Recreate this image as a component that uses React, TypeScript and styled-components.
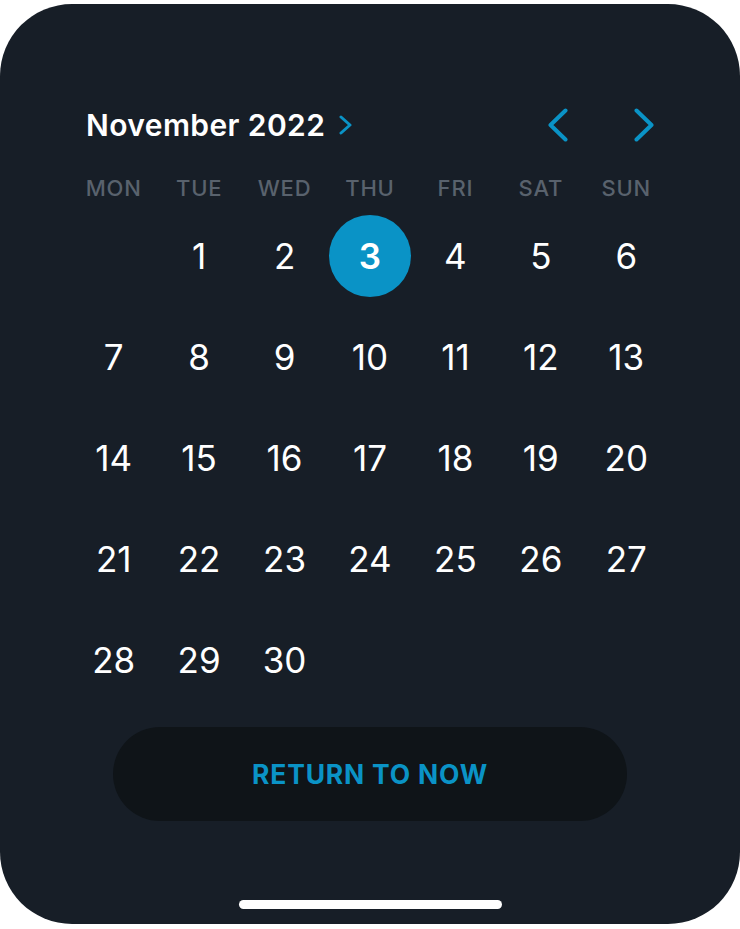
import React from "react";
import styled, { createGlobalStyle } from "styled-components";

const Global = createGlobalStyle`
  html, body { margin: 0; padding: 0; background: #ffffff; }
  body { font-family: Inter, "Noto Sans", sans-serif; }
`;

const Card = styled.div`
  box-sizing: border-box;
  width: 740px;
  height: 920px;
  margin-top: 4px;
  background: #171e27;
  border-radius: 72px;
  padding: 101px 71px 0;
  display: flex;
  flex-direction: column;
`;

const Header = styled.div`
  height: 40px;
  padding: 0 15px 0 15px;
  display: flex;
  align-items: center;
  justify-content: space-between;
`;

const TitleGroup = styled.div`
  display: flex;
  align-items: center;
  gap: 14px;
`;

const Title = styled.div`
  color: #ffffff;
  font-size: 30px;
  font-weight: 600;
  letter-spacing: 0.4px;
`;

const NavGroup = styled.div`
  display: flex;
  align-items: center;
  gap: 66px;
`;

const IconBtn = styled.button`
  background: none;
  border: none;
  padding: 0;
  display: flex;
  cursor: pointer;
`;

const Weekdays = styled.div`
  margin-top: 28px;
  height: 30px;
  display: grid;
  grid-template-columns: repeat(7, 1fr);
  align-items: center;
`;

const Weekday = styled.div`
  text-align: center;
  color: #59626d;
  font-size: 22px;
  font-weight: 500;
  letter-spacing: 0.8px;
`;

const Days = styled.div`
  margin-top: 2px;
  display: grid;
  grid-template-columns: repeat(7, 1fr);
  grid-auto-rows: 101px;
`;

const DayCell = styled.div`
  display: flex;
  align-items: center;
  justify-content: center;
`;

const Day = styled.div<{ $selected?: boolean }>`
  width: 82px;
  height: 82px;
  border-radius: 50%;
  display: flex;
  align-items: center;
  justify-content: center;
  color: #ffffff;
  font-size: 35px;
  font-weight: ${(p) => (p.$selected ? 600 : 400)};
  background: ${(p) => (p.$selected ? "#0a93c6" : "transparent")};
`;

const ReturnBtn = styled.button`
  align-self: center;
  margin-top: 17px;
  width: 514px;
  height: 94px;
  border-radius: 47px;
  border: none;
  background: #0f1418;
  color: #0a93c6;
  font-family: Inter, "Noto Sans", sans-serif;
  font-size: 26.5px;
  font-weight: 700;
  letter-spacing: 0.8px;
  cursor: pointer;
`;

const Spacer = styled.div`
  flex: 1;
`;

const HomeBar = styled.div`
  align-self: center;
  width: 263px;
  height: 9px;
  border-radius: 5px;
  background: #ffffff;
  margin-bottom: 15px;
`;

const Chevron = ({ dir, w, h, sw }: { dir: "left" | "right"; w: number; h: number; sw: number }) => {
  const pad = sw / 2 + 0.5;
  const pts =
    dir === "right"
      ? `${pad},${pad} ${w - pad},${h / 2} ${pad},${h - pad}`
      : `${w - pad},${pad} ${pad},${h / 2} ${w - pad},${h - pad}`;
  return (
    <svg width={w} height={h} viewBox={`0 0 ${w} ${h}`}>
      <polyline
        points={pts}
        fill="none"
        stroke="#0a93c6"
        strokeWidth={sw}
        strokeLinecap="round"
        strokeLinejoin="round"
      />
    </svg>
  );
};

const weekdays = ["MON", "TUE", "WED", "THU", "FRI", "SAT", "SUN"];

export default function App() {
  const cells: (number | null)[] = [null];
  for (let d = 1; d <= 30; d++) cells.push(d);
  return (
    <>
      <Global />
      <Card>
        <Header>
          <TitleGroup>
            <Title>November 2022</Title>
            <Chevron dir="right" w={13} h={20} sw={3} />
          </TitleGroup>
          <NavGroup>
            <IconBtn aria-label="Previous month">
              <Chevron dir="left" w={20} h={34} sw={4} />
            </IconBtn>
            <IconBtn aria-label="Next month">
              <Chevron dir="right" w={20} h={34} sw={4} />
            </IconBtn>
          </NavGroup>
        </Header>
        <Weekdays>
          {weekdays.map((w) => (
            <Weekday key={w}>{w}</Weekday>
          ))}
        </Weekdays>
        <Days>
          {cells.map((d, i) => (
            <DayCell key={i}>{d !== null && <Day $selected={d === 3}>{d}</Day>}</DayCell>
          ))}
        </Days>
        <ReturnBtn>RETURN TO NOW</ReturnBtn>
        <Spacer />
        <HomeBar />
      </Card>
    </>
  );
}
